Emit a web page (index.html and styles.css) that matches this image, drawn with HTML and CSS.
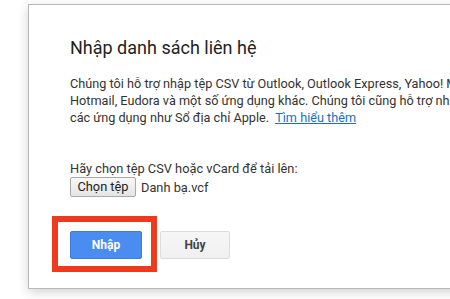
FILE: index.html
```html
<!DOCTYPE html>
<html lang="vi">
<head>
<meta charset="utf-8">
<link rel="stylesheet" href="styles.css">
</head>
<body>
<div class="dialog">
  <h1 class="title">Nhập danh sách liên hệ</h1>
  <p class="desc">Chúng tôi hỗ trợ nhập tệp CSV từ Outlook, Outlook Express, Yahoo! Mail,<br>Hotmail, Eudora và một số ứng dụng khác. Chúng tôi cũng hỗ trợ nhập vCard từ<br>các ứng dụng như Sổ địa chỉ Apple.&nbsp; <a class="link" href="#">Tìm hiểu thêm</a></p>
  <div class="file">
    <div class="file-label">Hãy chọn tệp CSV hoặc vCard để tải lên:</div>
    <div class="file-row">
      <span class="file-btn">Chọn tệp</span>
      <span class="file-name">Danh bạ.vcf</span>
    </div>
  </div>
  <div class="actions">
    <span class="btn btn-primary">Nhập</span>
    <span class="btn btn-default">Hủy</span>
  </div>
  <div class="highlight"></div>
</div>
</body>
</html>
```
FILE: styles.css
```css
html, body {
  margin: 0;
  padding: 0;
  background: #ffffff;
  overflow: hidden;
  width: 450px;
  height: 299px;
}
body {
  font-family: Roboto, "Liberation Sans", Arial, sans-serif;
  color: #222;
}
.dialog {
  position: relative;
  box-sizing: border-box;
  margin: 4px 0 0 28px;
  width: 560px;
  height: 285px;
  border: 1px solid #b9b9b9;
  background: #fff;
  box-shadow: 0 3px 10px rgba(0, 0, 0, 0.18);
  padding: 31px 0 0 41px;
}
.title {
  margin: 0;
  font-size: 18px;
  line-height: 24px;
  font-weight: 400;
  color: #222;
  white-space: nowrap;
}
.desc {
  margin: 15px 0 0;
  font-size: 12.7px;
  line-height: 17px;
  color: #333;
  white-space: nowrap;
}
.link {
  color: #1a6fc4;
  text-decoration: underline;
}
.file {
  margin-top: 34px;
  font-size: 12.8px;
  line-height: 17px;
  color: #333;
}
.file-row {
  display: flex;
  align-items: center;
  gap: 5px;
}
.file-btn {
  box-sizing: border-box;
  height: 20px;
  width: 66px;
  text-align: center;
  border: 1px solid #a9a9a9;
  border-radius: 2px;
  background: linear-gradient(#f8f8f8, #e4e4e4);
  line-height: 18px;
  color: #222;
}
.actions {
  margin-top: 34px;
  display: flex;
  gap: 18px;
}
.btn {
  box-sizing: border-box;
  height: 28px;
  display: flex;
  align-items: center;
  justify-content: center;
  font-size: 12px;
  font-weight: 700;
  border-radius: 2px;
}
.btn-primary {
  width: 72px;
  background: #4a8cf0;
  border: 1px solid #3b7be0;
  color: #fff;
}
.btn-default {
  width: 70px;
  background: linear-gradient(#f6f6f6, #f0f0f0);
  border: 1px solid #dcdcdc;
  color: #444;
}
.highlight {
  position: absolute;
  left: 23px;
  top: 211px;
  width: 105px;
  height: 56px;
  box-sizing: border-box;
  border: 6px solid #ef3a1e;
}
```
